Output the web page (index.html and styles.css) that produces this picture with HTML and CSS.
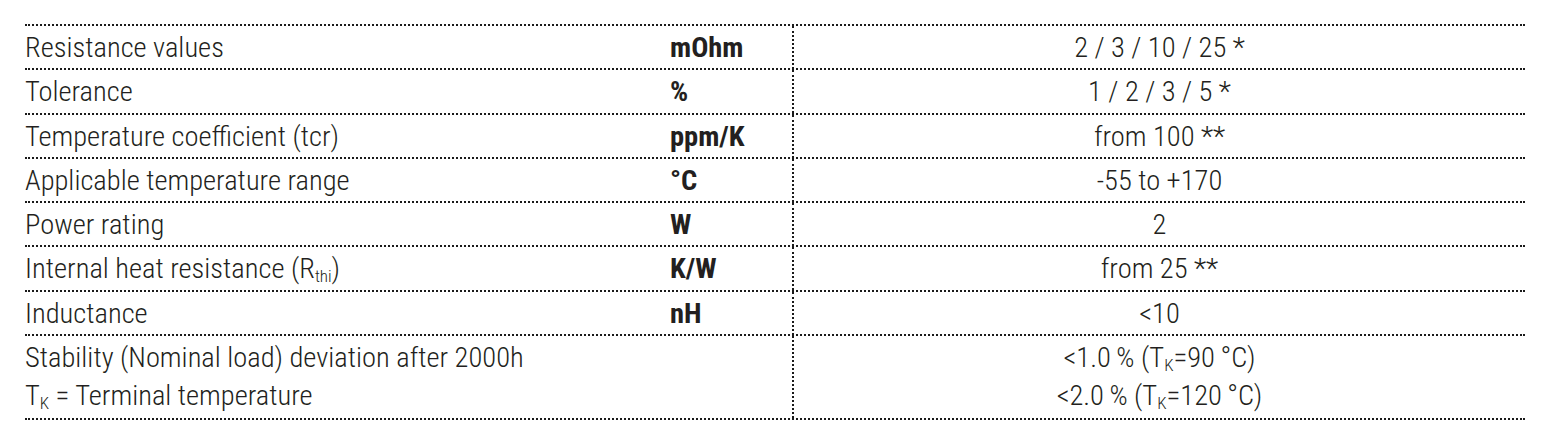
FILE: index.html
```html
<!DOCTYPE html>
<html lang="en">
<head>
<meta charset="utf-8">
<title>Specifications</title>
<link rel="stylesheet" href="styles.css">
</head>
<body>
<div class="spec-table">
  <div class="row">
    <div class="label">Resistance values</div>
    <div class="unit">mOhm</div>
    <div class="val">2 / 3 / 10 / 25 *</div>
  </div>
  <div class="row">
    <div class="label">Tolerance</div>
    <div class="unit">%</div>
    <div class="val">1 / 2 / 3 / 5 *</div>
  </div>
  <div class="row">
    <div class="label">Temperature coefficient (tcr)</div>
    <div class="unit">ppm/K</div>
    <div class="val">from 100 **</div>
  </div>
  <div class="row">
    <div class="label">Applicable temperature range</div>
    <div class="unit">°C</div>
    <div class="val">-55 to +170</div>
  </div>
  <div class="row">
    <div class="label">Power rating</div>
    <div class="unit">W</div>
    <div class="val">2</div>
  </div>
  <div class="row">
    <div class="label">Internal heat resistance (R<sub>thi</sub>)</div>
    <div class="unit">K/W</div>
    <div class="val">from 25 **</div>
  </div>
  <div class="row">
    <div class="label">Inductance</div>
    <div class="unit">nH</div>
    <div class="val">&lt;10</div>
  </div>
  <div class="row row-tall">
    <div class="label">Stability (Nominal load) deviation after 2000h<br>T<sub>K</sub> = Terminal temperature</div>
    <div class="unit"></div>
    <div class="val">&lt;1.0&#8201;% (T<sub>K</sub>=90&#8201;°C)<br>&lt;2.0&#8201;% (T<sub>K</sub>=120&#8201;°C)</div>
  </div>
</div>
</body>
</html>
```
FILE: styles.css
```css
html, body {
  margin: 0;
  padding: 0;
  background: #ffffff;
}

body {
  font-family: "Roboto Condensed", "Liberation Sans Narrow", "Liberation Sans", sans-serif;
  font-size: 28.5px;
  font-weight: 300;
  color: #231f20;
}

.spec-table {
  width: 1500px;
  margin: 24px 0 0 25px;
  border-top: 2px dotted #1a1a1a;
}

.row {
  display: grid;
  grid-template-columns: 645px 122px 733px;
  border-bottom: 2px dotted #1a1a1a;
  height: 42.3px;
  line-height: 42px;
}

.row-tall {
  height: 82px;
  line-height: 38px;
}

.label,
.unit,
.val {
  white-space: nowrap;
  padding-top: 1px;
}

.row-tall .label,
.row-tall .val {
  padding-top: 3px;
}

.unit {
  font-weight: 700;
}

.val {
  text-align: center;
  border-left: 2px dotted #1a1a1a;
}

sub {
  font-size: 17px;
  line-height: 0;
  vertical-align: -4px;
}
```
